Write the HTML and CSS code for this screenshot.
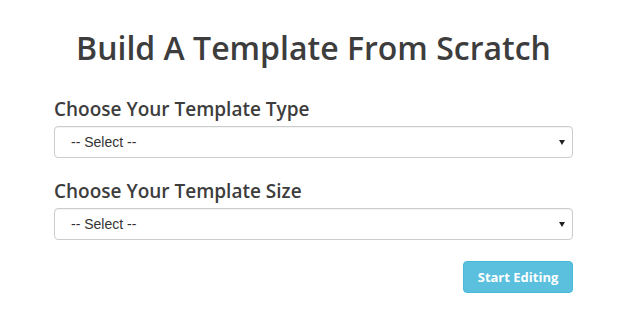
FILE: index.html
```html
<!DOCTYPE html>
<html lang="en">
<head>
    <meta charset="UTF-8">
    <meta name="viewport" content="width=device-width, initial-scale=1.0">
    <title>Build A Template</title>
    <link rel="stylesheet" href="styles.css">
</head>
<body>
    <div class="container">
        <h1>Build A Template From Scratch</h1>
        <div class="field">
            <label for="template-type">Choose Your Template Type</label>
            <div class="select-wrap">
                <select id="template-type" class="select">
                    <option>-- Select --</option>
                </select>
            </div>
        </div>
        <div class="field">
            <label for="template-size">Choose Your Template Size</label>
            <div class="select-wrap">
                <select id="template-size" class="select">
                    <option>-- Select --</option>
                </select>
            </div>
        </div>
        <div class="actions">
            <button class="button">Start Editing</button>
        </div>
    </div>
</body>
</html>
```

FILE: styles.css
```css
body {
    font-family: "Open Sans", "Noto Sans", sans-serif;
    margin: 0;
    padding: 0;
    background-color: #fff;
    color: #333;
}
.container {
    width: 519px;
    margin: 0 0 0 54px;
    padding-top: 28px;
}
h1 {
    font-size: 32px;
    font-weight: 600;
    line-height: 40px;
    margin: 0 0 28px;
    text-align: center;
    color: #3d3d3d;
}
.field {
    margin-bottom: 20px;
}
label {
    display: block;
    font-size: 19px;
    font-weight: 600;
    line-height: 26px;
    margin-bottom: 4px;
    color: #3d3d3d;
}
.select-wrap {
    position: relative;
}
/* little arrow on the right of the select */
.select-wrap::after {
    content: "";
    position: absolute;
    right: 8px;
    top: 14px;
    border-left: 3px solid transparent;
    border-right: 3px solid transparent;
    border-top: 5px solid #222;
    pointer-events: none;
}
.select {
    display: block;
    width: 100%;
    height: 32px;
    padding: 0 16px;
    font-family: "Liberation Sans", Arial, sans-serif;
    font-size: 14px;
    color: #333;
    background-color: #fff;
    border: 1px solid #ccc;
    border-radius: 4px;
    box-shadow: inset 0 1px 1px rgba(0,0,0,0.05);
    -webkit-appearance: none;
    appearance: none;
}
.actions {
    display: flex;
    justify-content: flex-end;
    padding-top: 1px;
}
.button {
    width: 110px;
    height: 32px;
    font-family: "Open Sans", "Noto Sans", sans-serif;
    font-size: 13px;
    font-weight: 700;
    color: #fff;
    background-color: #5bc0de;
    border: 1px solid #46b8da;
    border-radius: 4px;
    cursor: pointer;
}
```
